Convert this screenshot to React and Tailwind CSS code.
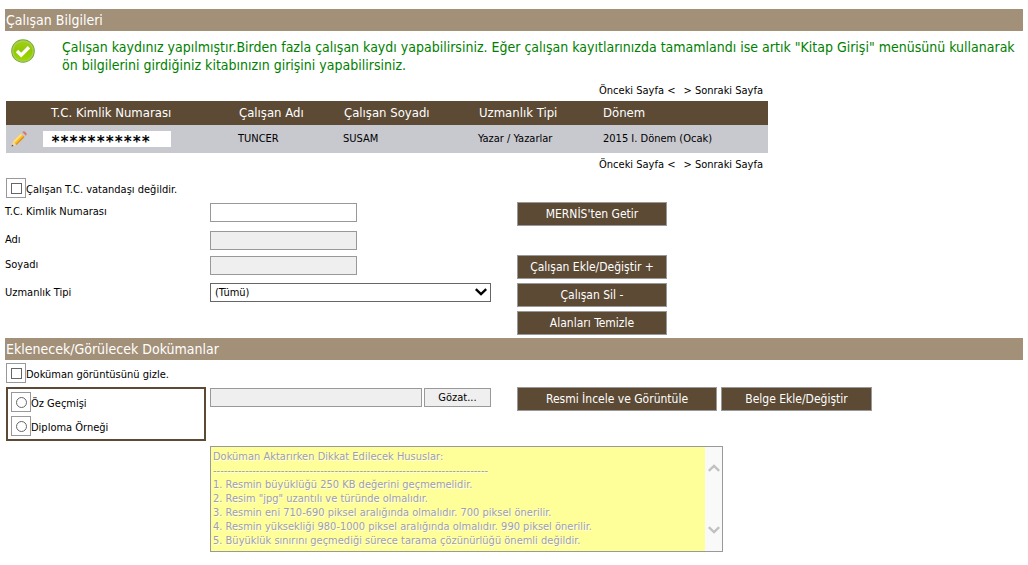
import React, { useState } from 'react';

const columns = ['T.C. Kimlik Numarası', 'Çalışan Adı', 'Çalışan Soyadı', 'Uzmanlık Tipi', 'Dönem'];

const rules = `Doküman Aktarırken Dikkat Edilecek Hususlar:
-----------------------------------------------------------------------------
1. Resmin büyüklüğü 250 KB değerini geçmemelidir.
2. Resim "jpg" uzantılı ve türünde olmalıdır.
3. Resmin eni 710-690 piksel aralığında olmalıdır. 700 piksel önerilir.
4. Resmin yüksekliği 980-1000 piksel aralığında olmalıdır. 990 piksel önerilir.
5. Büyüklük sınırını geçmediği sürece tarama çözünürlüğü önemli değildir.`;

const SectionTitle = ({ children }) => (
  <h2 className="h-[22px] bg-[#a39078] px-px text-[14px] leading-[22px] text-white">{children}</h2>
);

const Pager = () => (
  <nav className="flex h-[22px] justify-end gap-2 pt-[2px] pr-[5px] leading-5">
    <a href="#onceki">Önceki Sayfa &lt;</a>
    <a href="#sonraki">&gt; Sonraki Sayfa</a>
  </nav>
);

const Button = ({ className = 'w-[150px]', children }) => (
  <button
    type="button"
    className={`h-6 border border-[#999] bg-[#5c4a35] text-[12px] leading-[22px] text-white ${className}`}
  >
    {children}
  </button>
);

// checkbox or radio inside its outlined square, text right next to it
const Tick = ({ type = 'checkbox', label, ...rest }) => (
  <label className="flex h-5 items-end">
    <span className="flex size-5 shrink-0 items-center justify-center border border-[#999]">
      <input
        type={type}
        className={`size-[11px] appearance-none border border-[#666] bg-white checked:bg-[#666] ${
          type === 'radio' ? 'rounded-full' : ''
        }`}
        {...rest}
      />
    </span>
    <span className="leading-4">{label}</span>
  </label>
);

const TickIcon = () => (
  <svg className="size-6 shrink-0" viewBox="0 0 24 24">
    <defs>
      <linearGradient id="okFill" x1="0" y1="0" x2="0" y2="1">
        <stop offset="0" stopColor="#a3cf1c" />
        <stop offset="0.5" stopColor="#8fc800" />
        <stop offset="1" stopColor="#a0d800" />
      </linearGradient>
    </defs>
    <circle cx="12" cy="12" r="11.8" fill="#76a832" />
    <circle cx="12" cy="12" r="10.8" fill="#a9d152" />
    <circle cx="12" cy="12" r="9.6" fill="url(#okFill)" />
    <path d="M6 12l4.2 4.2L18 8.2" fill="none" stroke="#fff" strokeWidth="3.4" />
  </svg>
);

const PencilIcon = () => (
  <svg className="size-4" viewBox="0 0 16 16">
    <path d="M0.5 15.5l1.4-5 3.6 3.6z" fill="#f3d9a8" />
    <path d="M0.5 15.5l0.6-2 1.5 1.5z" fill="#444" />
    <path d="M1.9 10.5L10 2.4l3.6 3.6-8.1 8.1z" fill="#f9bd2f" />
    <path d="M1.9 10.5L10 2.4l1.4 1.4-8.1 8.1z" fill="#ffe07a" />
    <path d="M4.6 13.2l8.1-8.1 0.9 0.9-8.1 8.1z" fill="#dd8f1c" />
    <path d="M10 2.4l1.3-1.3 3.6 3.6L13.6 6z" fill="#c5c9d2" />
    <path d="M11.3 1.1c0.9-1 2-1 2.9-0.2l0.9 0.9c0.8 0.9 0.8 2-0.2 2.9z" fill="#d9776b" />
  </svg>
);

const Chevron = ({ className }) => (
  <svg className={className} viewBox="0 0 12 8" fill="none" stroke="currentColor" strokeWidth="2.4">
    <path d="M0.8 1.2L6 6.2l5.2-5" />
  </svg>
);

export default function App() {
  const [docType, setDocType] = useState('');
  const field = 'mt-px h-[19px] w-[147px] border border-[#999] px-1 disabled:bg-[#efefef]';

  return (
    <main className="bg-white px-[5px] pt-[9px] font-['DejaVu_Sans_Condensed','DejaVu_Sans',sans-serif] text-[11px] text-black">
      <SectionTitle>Çalışan Bilgileri</SectionTitle>

      <div className="flex gap-[27px] pt-2 pb-[5px] pl-[6px]">
        <TickIcon />
        <p className="-mt-px text-[14px] leading-[18px] text-[#008000]">
          Çalışan kaydınız yapılmıştır.Birden fazla çalışan kaydı yapabilirsiniz. Eğer çalışan kayıtlarınızda
          tamamlandı ise artık "Kitap Girişi" menüsünü kullanarak ön bilgilerini girdiğiniz kitabınızın girişini
          yapabilirsiniz.
        </p>
      </div>

      <div className="ml-px w-full max-w-[762px]">
        <Pager />
        <table className="w-full table-fixed text-left">
          <colgroup>
            <col className="w-[37px]" />
            <col className="w-[188px]" />
            <col className="w-[105px]" />
            <col className="w-[135px]" />
            <col className="w-[124px]" />
            <col />
          </colgroup>
          <thead>
            <tr className="h-6 bg-[#5c4a35] text-[13px] leading-5 text-white">
              <th aria-label="Düzenle" />
              {columns.map((name) => (
                <th key={name} className="pl-2 font-normal">{name}</th>
              ))}
            </tr>
          </thead>
          <tbody>
            <tr className="h-7 bg-[#c8c8cf]">
              <td className="pl-[5px]">
                <button type="button" aria-label="Düzenle" className="block"><PencilIcon /></button>
              </td>
              <td>
                <div className="h-4 w-32 bg-white pl-2 font-['DejaVu_Sans_Mono',monospace] text-[15px] leading-[22px] font-bold">
                  ***********
                </div>
              </td>
              <td className="pl-[7px]">TUNCER</td>
              <td className="pl-[7px]">SUSAM</td>
              <td className="pl-[7px]">Yazar / Yazarlar</td>
              <td className="pl-2">2015 I. Dönem (Ocak)</td>
            </tr>
          </tbody>
        </table>
        <Pager />
      </div>

      <div className="mt-[3px] ml-px">
        <Tick label="Çalışan T.C. vatandaşı değildir." />
      </div>

      <form className="mt-1 grid grid-cols-[205px_307px_1fr] grid-rows-[28px_25px_28px_28px_27px] items-start leading-5">
        <label htmlFor="tc">T.C. Kimlik Numarası</label>
        <input id="tc" type="text" className={field} />
        <Button>MERNİS'ten Getir</Button>

        <label htmlFor="ad">Adı</label>
        <input id="ad" type="text" disabled className={field} />
        <span />

        <label htmlFor="soyad">Soyadı</label>
        <input id="soyad" type="text" disabled className={field} />
        <Button>Çalışan Ekle/Değiştir +</Button>

        <label htmlFor="uzmanlik">Uzmanlık Tipi</label>
        <div className="relative w-[281px]">
          <select id="uzmanlik" className="block h-[19px] w-full appearance-none border border-[#666] bg-white pl-1 leading-[17px]">
            <option>(Tümü)</option>
            <option>Yazar / Yazarlar</option>
          </select>
          <Chevron className="pointer-events-none absolute top-[5px] right-1 h-2 w-3" />
        </div>
        <Button>Çalışan Sil -</Button>

        <div className="col-start-3 flex">
          <Button>Alanları Temizle</Button>
        </div>
      </form>

      <SectionTitle>Eklenecek/Görülecek Dokümanlar</SectionTitle>

      <div className="mt-[3px] ml-px">
        <Tick label="Doküman görüntüsünü gizle." />
      </div>

      <form className="mt-1 grid grid-cols-[205px_307px_1fr] items-start gap-y-[5px]">
        <fieldset className="ml-px flex w-[200px] flex-col gap-1 border-2 border-[#5c4a35] p-[3px]">
          {['Öz Geçmişi', 'Diploma Örneği'].map((name) => (
            <Tick
              key={name}
              type="radio"
              name="belge"
              label={name}
              checked={docType === name}
              onChange={() => setDocType(name)}
            />
          ))}
        </fieldset>
        <div className="mt-px flex gap-[2px]">
          <input type="text" readOnly aria-label="Dosya" className="h-[19px] w-[212px] border border-[#999] bg-[#efefef] px-1" />
          <button type="button" className="h-[19px] w-[67px] border border-[#999] bg-[#efefef] leading-[17px]">Gözat...</button>
        </div>
        <div className="flex gap-1">
          <Button className="w-[200px]">Resmi İncele ve Görüntüle</Button>
          <Button className="w-[151px]">Belge Ekle/Değiştir</Button>
        </div>

        <div className="col-span-2 col-start-2 flex h-[106px] w-full max-w-[513px] border border-[#999]">
          <textarea
            readOnly
            aria-label="Doküman kuralları"
            value={rules}
            className="flex-1 resize-none overflow-hidden bg-[#ffff99] px-[2px] pt-[3px] leading-[14px] text-[#a0a0a0] text-shadow-[1px_1px_0_#fff]"
          />
          <div className="flex w-[17px] flex-col items-center justify-between bg-[#f9f9f9] py-[17px] text-[#c1c1c1]">
            <Chevron className="h-2 w-3 rotate-180" />
            <Chevron className="h-2 w-3" />
          </div>
        </div>
      </form>
    </main>
  );
}
